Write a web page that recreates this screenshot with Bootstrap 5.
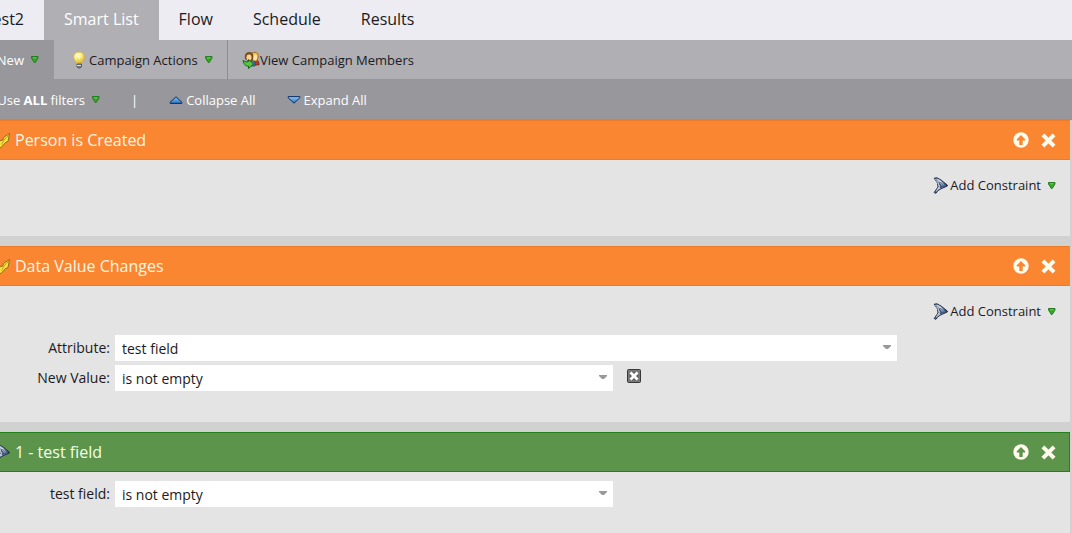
<!DOCTYPE html>
<html lang="en">
<head>
<meta charset="utf-8">
<meta name="viewport" content="width=device-width, initial-scale=1">
<title>Smart List</title>
<link href="https://cdn.jsdelivr.net/npm/bootstrap@5.3.0/dist/css/bootstrap.min.css" rel="stylesheet">
<style>
body{font-family:"Open Sans","Noto Sans",sans-serif;font-size:13px;line-height:20px;color:#1c1a22;background:#d1d1d1;overflow:hidden}
svg{flex:none;display:block}
button{border:0;background:none;color:inherit;padding:0;white-space:nowrap}
.tabs{height:40px;background:#edecf3;font-size:16px}
.tabs .nav-link{color:#1c1a22;padding:0 20px;height:40px;line-height:38px;white-space:nowrap}
.tabs .nav-link.active{background:#b0afb3;color:#fff}
.edge{display:flex;justify-content:flex-end;overflow:hidden;flex:none}
.tabs .edge{width:44px}
.actions{height:40px;background:#b0afb3}
.actions button{height:40px;border-bottom:1px solid #98979b}
.actions .edge{width:54px;background:#98979b;color:#fff;padding-right:15px}
.actions .campaign{width:174px;padding-left:17px;border-right:1px solid #8e8d92}
.actions .members{padding-left:14px}
.filters{height:40px;background:#98979b;color:#fff;border-bottom:1px solid #8299a2}
.filters .edge{width:100px}
.near{margin-right:2px}
.filters .near{margin-right:3px}
.apart{margin-left:31px}
.arrow{margin-left:7px}
.main{padding-right:2px;gap:10px}
.rule{background:#e4e4e4}
.rule-head{height:40px;background:#fa8632;border:1px solid #ed7b27;border-width:1px 0;color:#fff5e2;padding-right:14px;font-size:16px}
.rule-head h2{font-size:16px;font-weight:400;line-height:38px;margin:0 0 0 5px}
.rule-head.green{background:#5d944c;border:1px solid #26801c;border-left:0;color:#f4ffe8;padding-right:13px}
.glyph{width:10px;overflow:hidden;display:flex;justify-content:flex-end}
.short{height:76px}
.tall{height:136px}
.constraint{padding:15px 14px 14px 0}
.field{margin-bottom:4px;font-size:14px}
.field label{width:110px;text-align:right;margin-right:5px;white-space:nowrap}
.field select{height:26px;border:0;border-radius:0;outline:0;appearance:none;font-size:14px;color:#1c1a22;padding:1px 24px 0 7px;background:#fff url("data:image/svg+xml,%3Csvg xmlns='http://www.w3.org/2000/svg' width='8' height='4'%3E%3Cpath d='M0 0H8V1L5 4H3L0 1Z' fill='%23999'/%3E%3C/svg%3E") no-repeat right 6px top 10px}
.wide{flex:0 1 782px}
.mid{flex:0 1 498px}
.clear{margin:0 0 5px 14px}
.last{padding-top:9px}
</style>
</head>
<body class="d-flex flex-column min-vh-100">
<svg width="0" height="0" class="position-absolute" aria-hidden="true">
<defs>
<linearGradient id="blue" x1="0" y1="0" x2="0" y2="1"><stop stop-color="#8cc8f4"/><stop offset="1" stop-color="#2473c4"/></linearGradient>
<radialGradient id="glow" cx=".4" cy=".3" r=".7"><stop stop-color="#fffde0"/><stop offset=".5" stop-color="#fbec7a"/><stop offset="1" stop-color="#d5aa2e"/></radialGradient>
<linearGradient id="steel"><stop stop-color="#3c4c69"/><stop offset=".4" stop-color="#c5d3df"/><stop offset="1" stop-color="#1d2b4c"/></linearGradient>
<symbol id="down" viewBox="0 0 8 7"><path d="M.5.5h6.500v1.500L4.200 6.500h-.9L.5 2z" fill="#36a824" stroke="#1c751b" stroke-width=".9"/><path d="M2 1.800h3.500" stroke="#7bd75c" stroke-width=".8"/></symbol>
<symbol id="tri" viewBox="0 0 13 8"><path d="M6.500.8 12.300 6.200v1.200H.7V6.200z" fill="url(#blue)" stroke="#0e2b60"/></symbol>
<symbol id="bolt" viewBox="0 0 16 16"><path d="M15.500 1.500 14 9.500 11.500 10.500 7 15.500 2 16l3-7 4-1 .5-2.500z" fill="#f8df3d" stroke="#765d16" stroke-width=".8"/><path d="m14.500 3.500-4 4-3 5" stroke="#a07a1a" fill="none" stroke-width=".6"/></symbol>
<symbol id="funnel" viewBox="0 0 15 17"><path d="M1.200 1.200 4 .8 8 3l6.300 5v1L8 11.800 5 13.500 3 16.300l-1.800-.8L5 10 4.500 6z" fill="url(#steel)" stroke="#22304e"/><path d="M5.500 4 13.500 8.500 7 11.500z" fill="#40557c"/><path d="m2.500 2 4.500 8M4.500 2l5 7M7 4l4 4.500M5.500 10.500 3 14.500" stroke="#dfe9f0" stroke-dasharray="1.500 .7" fill="none" stroke-width=".9"/></symbol>
<symbol id="up" viewBox="0 0 16 16"><circle cx="8" cy="8" r="7.700" fill="#fffbed"/><path d="M8 3 3.800 7.300v1.300h2.500V13h3.400V8.600h2.500V7.300z" fill="var(--head)"/></symbol>
<symbol id="cross" viewBox="0 0 14 14"><path d="m1.800 1.800 10.400 10.400m0-10.400L1.800 12.200" stroke="#fffbed" stroke-width="3.800"/></symbol>
</defs></svg>

<nav class="nav tabs flex-nowrap" aria-label="Campaign">
<a class="nav-link edge" href="#">est2</a>
<a class="nav-link active" href="#" aria-current="page">Smart List</a>
<a class="nav-link" href="#">Flow</a>
<a class="nav-link" href="#">Schedule</a>
<a class="nav-link" href="#">Results</a>
</nav>

<div class="actions d-flex">
<button class="edge align-items-center">New<svg class="arrow" width="8" height="7"><use href="#down"/></svg></button>
<button class="campaign d-flex align-items-center">
<svg width="16" height="18" viewBox="0 0 16 18" class="near"><path d="M8 1C4.500 1 2.500 3.300 2.500 6c0 2.800 2.500 4 3 7h5c.5-3 3-4.200 3-7 0-2.700-2-5-5.500-5z" fill="url(#glow)" stroke="#d3b34b" stroke-width=".8"/><path d="M6 13h4.500v3L9 17H7.500L6 16z" fill="#777c80" stroke="#4a4f52" stroke-width=".8"/><path d="M6 14.500h4" stroke="#ddd"/><path d="m6.500 7 1 5m2-5-1 5" stroke="#e3bc35" stroke-width=".6"/></svg>Campaign Actions<svg class="arrow" width="8" height="7"><use href="#down"/></svg></button>
<button class="members flex-fill d-flex align-items-center">
<svg width="18" height="18" viewBox="0 0 18 18"><path d="M10 11c0-3 7-3 7 1v2h-5z" fill="#bd382a" stroke="#68281f" stroke-width=".7"/><path d="M5 11c0-3 8-3 8 1v3H7z" fill="#3f75b4" stroke="#223963" stroke-width=".7"/><path d="M10 2c5-2 7 1 6 5l-1 3h-4z" fill="#f5c84a" stroke="#895519" stroke-width=".8"/><ellipse cx="13" cy="6.500" rx="2" ry="2.700" fill="#ffe3ad"/><path d="M3.500 8c-1-5 1-6.500 4-6.500S11.500 4 10.500 8L8 10.500z" fill="#8a541e" stroke="#54340f" stroke-width=".7"/><ellipse cx="7" cy="6.500" rx="2.500" ry="3" fill="#fbd392"/><path d="M1 9.500 4.500 11l2-.5V8.500l5 4.500-5 4.500V15C4 15.500 2 14 1 9.500z" fill="#55c83d" stroke="#176919"/></svg>View Campaign Members</button>
</div>

<div class="filters d-flex align-items-center">
<button class="edge align-items-center"><span>Use <b>ALL</b> filters</span><svg class="arrow" width="8" height="7"><use href="#down"/></svg></button>
<span class="apart">|</span>
<button class="d-flex align-items-center apart"><svg class="near" width="14" height="8"><use href="#tri"/></svg>Collapse All</button>
<button class="d-flex align-items-center apart"><svg class="near" width="14" height="8" viewBox="0 0 13 8"><path d="M.7.600h11.600v1.200L6.500 7.200.7 1.800z" fill="url(#blue)" stroke="#0e2b60"/></svg>Expand All</button>
</div>

<main class="main d-flex flex-column flex-fill">
<section class="rule">
<div class="rule-head d-flex align-items-center" style="--head:#fa8632"><span class="glyph"><svg width="16" height="16"><use href="#bolt"/></svg></span><h2>Person is Created</h2>
<button class="ms-auto me-2 pe-1" aria-label="Move up"><svg width="16" height="16"><use href="#up"/></svg></button><button aria-label="Remove"><svg width="15" height="15"><use href="#cross"/></svg></button></div>
<div class="short"><div class="constraint d-flex justify-content-end"><button class="d-flex align-items-center"><svg width="15" height="17" class="near"><use href="#funnel"/></svg>Add Constraint<svg class="arrow" width="8" height="7"><use href="#down"/></svg></button></div></div>
</section>

<section class="rule">
<div class="rule-head d-flex align-items-center" style="--head:#fa8632"><span class="glyph"><svg width="16" height="16"><use href="#bolt"/></svg></span><h2>Data Value Changes</h2>
<button class="ms-auto me-2 pe-1" aria-label="Move up"><svg width="16" height="16"><use href="#up"/></svg></button><button aria-label="Remove"><svg width="15" height="15"><use href="#cross"/></svg></button></div>
<div class="tall"><div class="constraint d-flex justify-content-end"><button class="d-flex align-items-center"><svg width="15" height="17" class="near"><use href="#funnel"/></svg>Add Constraint<svg class="arrow" width="8" height="7"><use href="#down"/></svg></button></div>
<div class="field d-flex align-items-center"><label for="attribute">Attribute:</label><select id="attribute" class="wide"><option>test field</option></select></div>
<div class="field d-flex align-items-center"><label for="newvalue">New Value:</label><select id="newvalue" class="mid"><option>is not empty</option></select>
<button class="clear" aria-label="Clear value"><svg width="14" height="14" viewBox="0 0 14 14"><rect x=".5" y=".5" width="13" height="13" rx="1" fill="#777" stroke="#393939"/><path d="m4 4 6 6m0-6-6 6" stroke="#444" stroke-width="4.500"/><path d="m3.500 3.500 7 7m0-7-7 7" stroke="#fff" stroke-width="3"/></svg></button></div>
</div>
</section>

<section class="rule flex-fill">
<div class="rule-head green d-flex align-items-center" style="--head:#5d944c"><span class="glyph"><svg width="15" height="17"><use href="#funnel"/></svg></span><h2>1 - test field</h2>
<button class="ms-auto me-2 pe-1" aria-label="Move up"><svg width="16" height="16"><use href="#up"/></svg></button><button aria-label="Remove"><svg width="15" height="15"><use href="#cross"/></svg></button></div>
<div class="field last d-flex align-items-center"><label for="testfield">test field:</label><select id="testfield" class="mid"><option>is not empty</option></select></div>
</section>
</main>
<script src="https://cdn.jsdelivr.net/npm/bootstrap@5.3.0/dist/js/bootstrap.bundle.min.js"></script>
</body>
</html>
